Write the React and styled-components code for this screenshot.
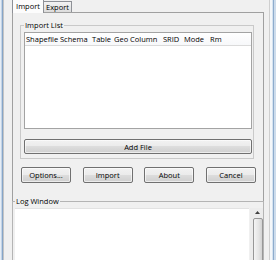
import React from 'react';
import styled, { createGlobalStyle } from 'styled-components';

const GlobalStyle = createGlobalStyle`
  body {
    margin: 0;
    background: #f0f0f0;
    font-family: "Open Sans", "Liberation Sans", sans-serif;
    font-size: 7.5px;
    color: #000;
  }
`;

const columns = [
  { name: 'Shapefile', w: 34 },
  { name: 'Schema', w: 32 },
  { name: 'Table', w: 22 },
  { name: 'Geo Column', w: 49 },
  { name: 'SRID', w: 21 },
  { name: 'Mode', w: 26 },
  { name: 'Rm', w: 30 },
];

export default function App() {
  return (
    <>
      <GlobalStyle />
      <Window>
        <Frame side="left" />
        <Client>
          <TabStrip>
            <Tab active w={32}>Import</Tab>
            <Tab w={29}>Export</Tab>
          </TabStrip>

          <TabPane>
            <GroupBox>
              <Legend>Import List</Legend>
              <ListView>
                <ListHeader>
                  {columns.map(c => <HeaderCell key={c.name} w={c.w}>{c.name}</HeaderCell>)}
                </ListHeader>
              </ListView>
              <Button wide>Add File</Button>
            </GroupBox>

            <ButtonRow>
              <Button>Options...</Button>
              <Button>Import</Button>
              <Button>About</Button>
              <Button>Cancel</Button>
            </ButtonRow>
          </TabPane>

          <LogGroup>
            <Legend>Log Window</Legend>
            <LogArea>
              <LogText />
              <ScrollBar>
                <ScrollArrow>
                  <svg width="5" height="3" viewBox="0 0 5 3">
                    <path d="M0 3 L2.5 0 L5 3 Z" fill="#404040" />
                  </svg>
                </ScrollArrow>
                <ScrollThumb />
              </ScrollBar>
            </LogArea>
          </LogGroup>
        </Client>
        <Frame side="right" />
      </Window>
    </>
  );
}

const Window = styled.div`
  display: flex;
  width: 276px;
  height: 260px;
  overflow: hidden;
`;

const Frame = styled.div`
  flex: none;
  width: ${p => (p.side === 'left' ? 4 : 7)}px;
  background: ${p => p.side === 'left'
    ? 'linear-gradient(90deg, #e6edf5 0 1px, #c3d4e7 1px 2px, #86a5c7 2px 3px, #c4c4c4 3px)'
    : 'linear-gradient(90deg, #cfcfcf 0 1px, #f4f7fa 1px 3px, #d6e3f0 3px 4px, #8eaccd 4px 5px, #cddcec 5px)'};
`;

const Client = styled.div`
  flex: 1;
  min-width: 0;
  display: flex;
  flex-direction: column;
  padding: 0 5px 0 8px;
  background: #f0f0f0;
`;

const TabStrip = styled.div`
  display: flex;
  align-items: flex-end;
  height: 12px;
  flex: none;
`;

const Tab = styled.div`
  position: relative;
  z-index: ${p => (p.active ? 2 : 1)};
  box-sizing: border-box;
  width: ${p => p.w}px;
  height: ${p => (p.active ? 13 : 11)}px;
  margin-bottom: ${p => (p.active ? -1 : 0)}px;
  margin-left: ${p => (p.active ? 0 : -1)}px;
  border: 1px solid #8e9197;
  border-top: ${p => (p.active ? 'none' : '1px solid #8e9197')};
  border-bottom: none;
  background: ${p => (p.active ? '#fcfcfc' : 'linear-gradient(#f3f3f3, #dcdcdc)')};
  display: flex;
  align-items: center;
  justify-content: center;
  line-height: 10px;
  padding-bottom: ${p => (p.active ? 1 : 0)}px;
`;

const TabPane = styled.div`
  flex: none;
  box-sizing: border-box;
  height: 189px;
  border: 1px solid #a0a0a0;
  border-bottom: none;
  padding: 7px 9px 0 7px;
  display: flex;
  flex-direction: column;
`;

const GroupBox = styled.fieldset`
  margin: 0;
  padding: 2px 1px 4px 3px;
  border: 1px solid #c9c9c9;
  display: flex;
  flex-direction: column;
  min-width: 0;
`;

const Legend = styled.legend`
  padding: 0 1px;
  line-height: 10px;
  height: 10px;
`;

const ListView = styled.div`
  box-sizing: border-box;
  height: 97px;
  border: 1px solid #a3a3a3;
  background: #fff;
`;

const ListHeader = styled.div`
  display: flex;
  height: 12px;
  line-height: 12px;
  padding-left: 1px;
  border-bottom: 1px solid #dadada;
  background: linear-gradient(#ffffff, #f7f8fa);
`;

const HeaderCell = styled.div`
  flex: none;
  width: ${p => p.w}px;
  white-space: nowrap;
`;

const Button = styled.div`
  box-sizing: border-box;
  height: ${p => (p.wide ? 15 : 16)}px;
  width: ${p => (p.wide ? 'auto' : '50px')};
  margin-top: ${p => (p.wide ? 10 : 0)}px;
  border: 1px solid #707070;
  border-radius: 2px;
  background: linear-gradient(#f2f2f2 0%, #ebebeb 50%, #dddddd 50%, #cfcfcf 100%);
  box-shadow: inset 0 0 0 1px rgba(255, 255, 255, 0.6);
  display: flex;
  align-items: center;
  justify-content: center;
  line-height: 10px;
`;

const ButtonRow = styled.div`
  display: flex;
  justify-content: space-between;
  margin: 8px 0 0 1px;
  width: 235px;
`;

const LogGroup = styled.fieldset`
  flex: none;
  margin: -5px 0 0;
  padding: 2px 0 0 2px;
  border: 1px solid #b4b4b4;
  min-width: 0;
`;

const LogArea = styled.div`
  display: flex;
  gap: 1px;
  height: 72px;
`;

const LogText = styled.div`
  flex: 1;
  background: #fff;
  border-top: 1px solid #e2e2e2;
`;

const ScrollBar = styled.div`
  flex: none;
  width: 13px;
  display: flex;
  flex-direction: column;
  background: #ececec;
`;

const ScrollArrow = styled.div`
  flex: none;
  height: 9px;
  display: flex;
  align-items: center;
  justify-content: center;
  padding-left: 2px;
`;

const ScrollThumb = styled.div`
  flex: 1;
  margin: 1px 0 0 3px;
  border: 1px solid #979797;
  border-radius: 2px 2px 0 0;
  background: linear-gradient(90deg, #f4f4f4, #e4e4e4 60%, #d2d2d2);
`;
